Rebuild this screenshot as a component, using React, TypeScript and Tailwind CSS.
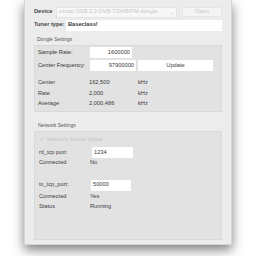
import React from 'react';

const font = { fontFamily: '"Liberation Sans", Arial, sans-serif' };

const Row: React.FC<{ label: string; value: string; unit?: string }> = ({ label, value, unit }) => (
  <div className="flex h-[10.5px] items-center">
    <span className="w-[51px] shrink-0">{label}</span>
    <span className="w-[49px] shrink-0">{value}</span>
    {unit && <span>{unit}</span>}
  </div>
);

const Field: React.FC<{ w: string; value: string; right?: boolean }> = ({ w, value, right }) => (
  <div className={`${w} h-[11px] bg-white flex items-center px-[2px] ${right ? 'justify-end' : ''}`}>
    {value}
  </div>
);

export default function App() {
  return (
    <div className="w-[256px] h-[256px] bg-white overflow-hidden text-[5.7px] text-[#3a3a3a] leading-none" style={font}>
      <div className="ml-[24px] w-[208px] h-[245px] bg-[#ececec] border-x border-b border-[#d4d4d4] shadow-[0_5px_11px_rgba(0,0,0,0.5)] flex flex-col pl-[9px] pr-[9px] pt-[6px]">
        {/* device */}
        <div className="flex items-center h-[12px] gap-[2px]">
          <span className="w-[20px] font-bold text-[#444]">Device</span>
          <div className="w-[121px] h-[11px] bg-[#f7f7f7] border border-[#e4e4e4] flex items-center pl-[2px] text-[#c8c8c8] relative">
            ezcap USB 2.0 DVB-T/DAB/FM dongle
            <span className="absolute right-[1px] top-[1px] w-[7px] h-[7px] flex items-center justify-center text-[#b0b0b0] text-[5px]">⌄</span>
          </div>
          <div className="ml-[3px] flex-1 h-[10px] bg-[#f4f4f4] border border-[#e6e6e6] flex items-center justify-center text-[#c8c8c8]">Open</div>
        </div>
        {/* tuner */}
        <div className="flex items-center h-[12px] mt-[1px]">
          <span className="w-[32px] font-bold text-[#444]">Tuner type:</span>
          <div className="flex-1 h-[11px] bg-white flex items-center pl-[2px] font-bold">Baseclass!</div>
        </div>

        <div className="ml-[3px] mt-[6px] h-[6px] text-[5px] text-[#555]">Dongle Settings</div>
        <div className="mt-[2px] h-[67px] bg-[#e2e2e2] border border-[#d9d9d9] pl-[3px] pt-[1px] flex flex-col">
          <div className="flex items-center h-[11px]">
            <span className="w-[52px] text-[#333]">Sample Rate:</span>
            <Field w="w-[42px]" value="1600000" right />
          </div>
          <div className="flex items-center h-[11px] mt-[2px]">
            <span className="w-[52px] text-[#333]">Center Frequency:</span>
            <Field w="w-[46px]" value="97900000" right />
            <div className="ml-[2px] w-[75px] h-[11px] bg-white flex items-center justify-center">Update</div>
          </div>
          <div className="mt-[7px]">
            <Row label="Center" value="162,500" unit="kHz" />
            <Row label="Rate" value="2,000" unit="kHz" />
            <Row label="Average" value="2,000,486" unit="kHz" />
          </div>
        </div>

        <div className="ml-[4px] mt-[11px] h-[6px] text-[5px] text-[#555]">Network Settings</div>
        <div className="mt-[2px] h-[109px] bg-[#e2e2e2] border border-[#d9d9d9] pl-[4px] pt-[3px] flex flex-col">
          <div className="h-[10px] flex items-center text-[#c4c4c4] gap-[3px]">
            <span>✓</span>
            <span>Network Server Active</span>
          </div>
          <div className="flex items-center h-[11px] mt-[2px]">
            <span className="w-[53px]">rtl_tcp port:</span>
            <Field w="w-[41px]" value="1234" />
          </div>
          <Row label="Connected" value="No" />
          <div className="flex items-center h-[11px] mt-[11px]">
            <span className="w-[52px]">tx_tcp_port:</span>
            <Field w="w-[40px]" value="50000" />
          </div>
          <div className="mt-[1px]">
            <Row label="Connected" value="Yes" />
            <Row label="Status" value="Running" />
          </div>
        </div>
      </div>
    </div>
  );
}
